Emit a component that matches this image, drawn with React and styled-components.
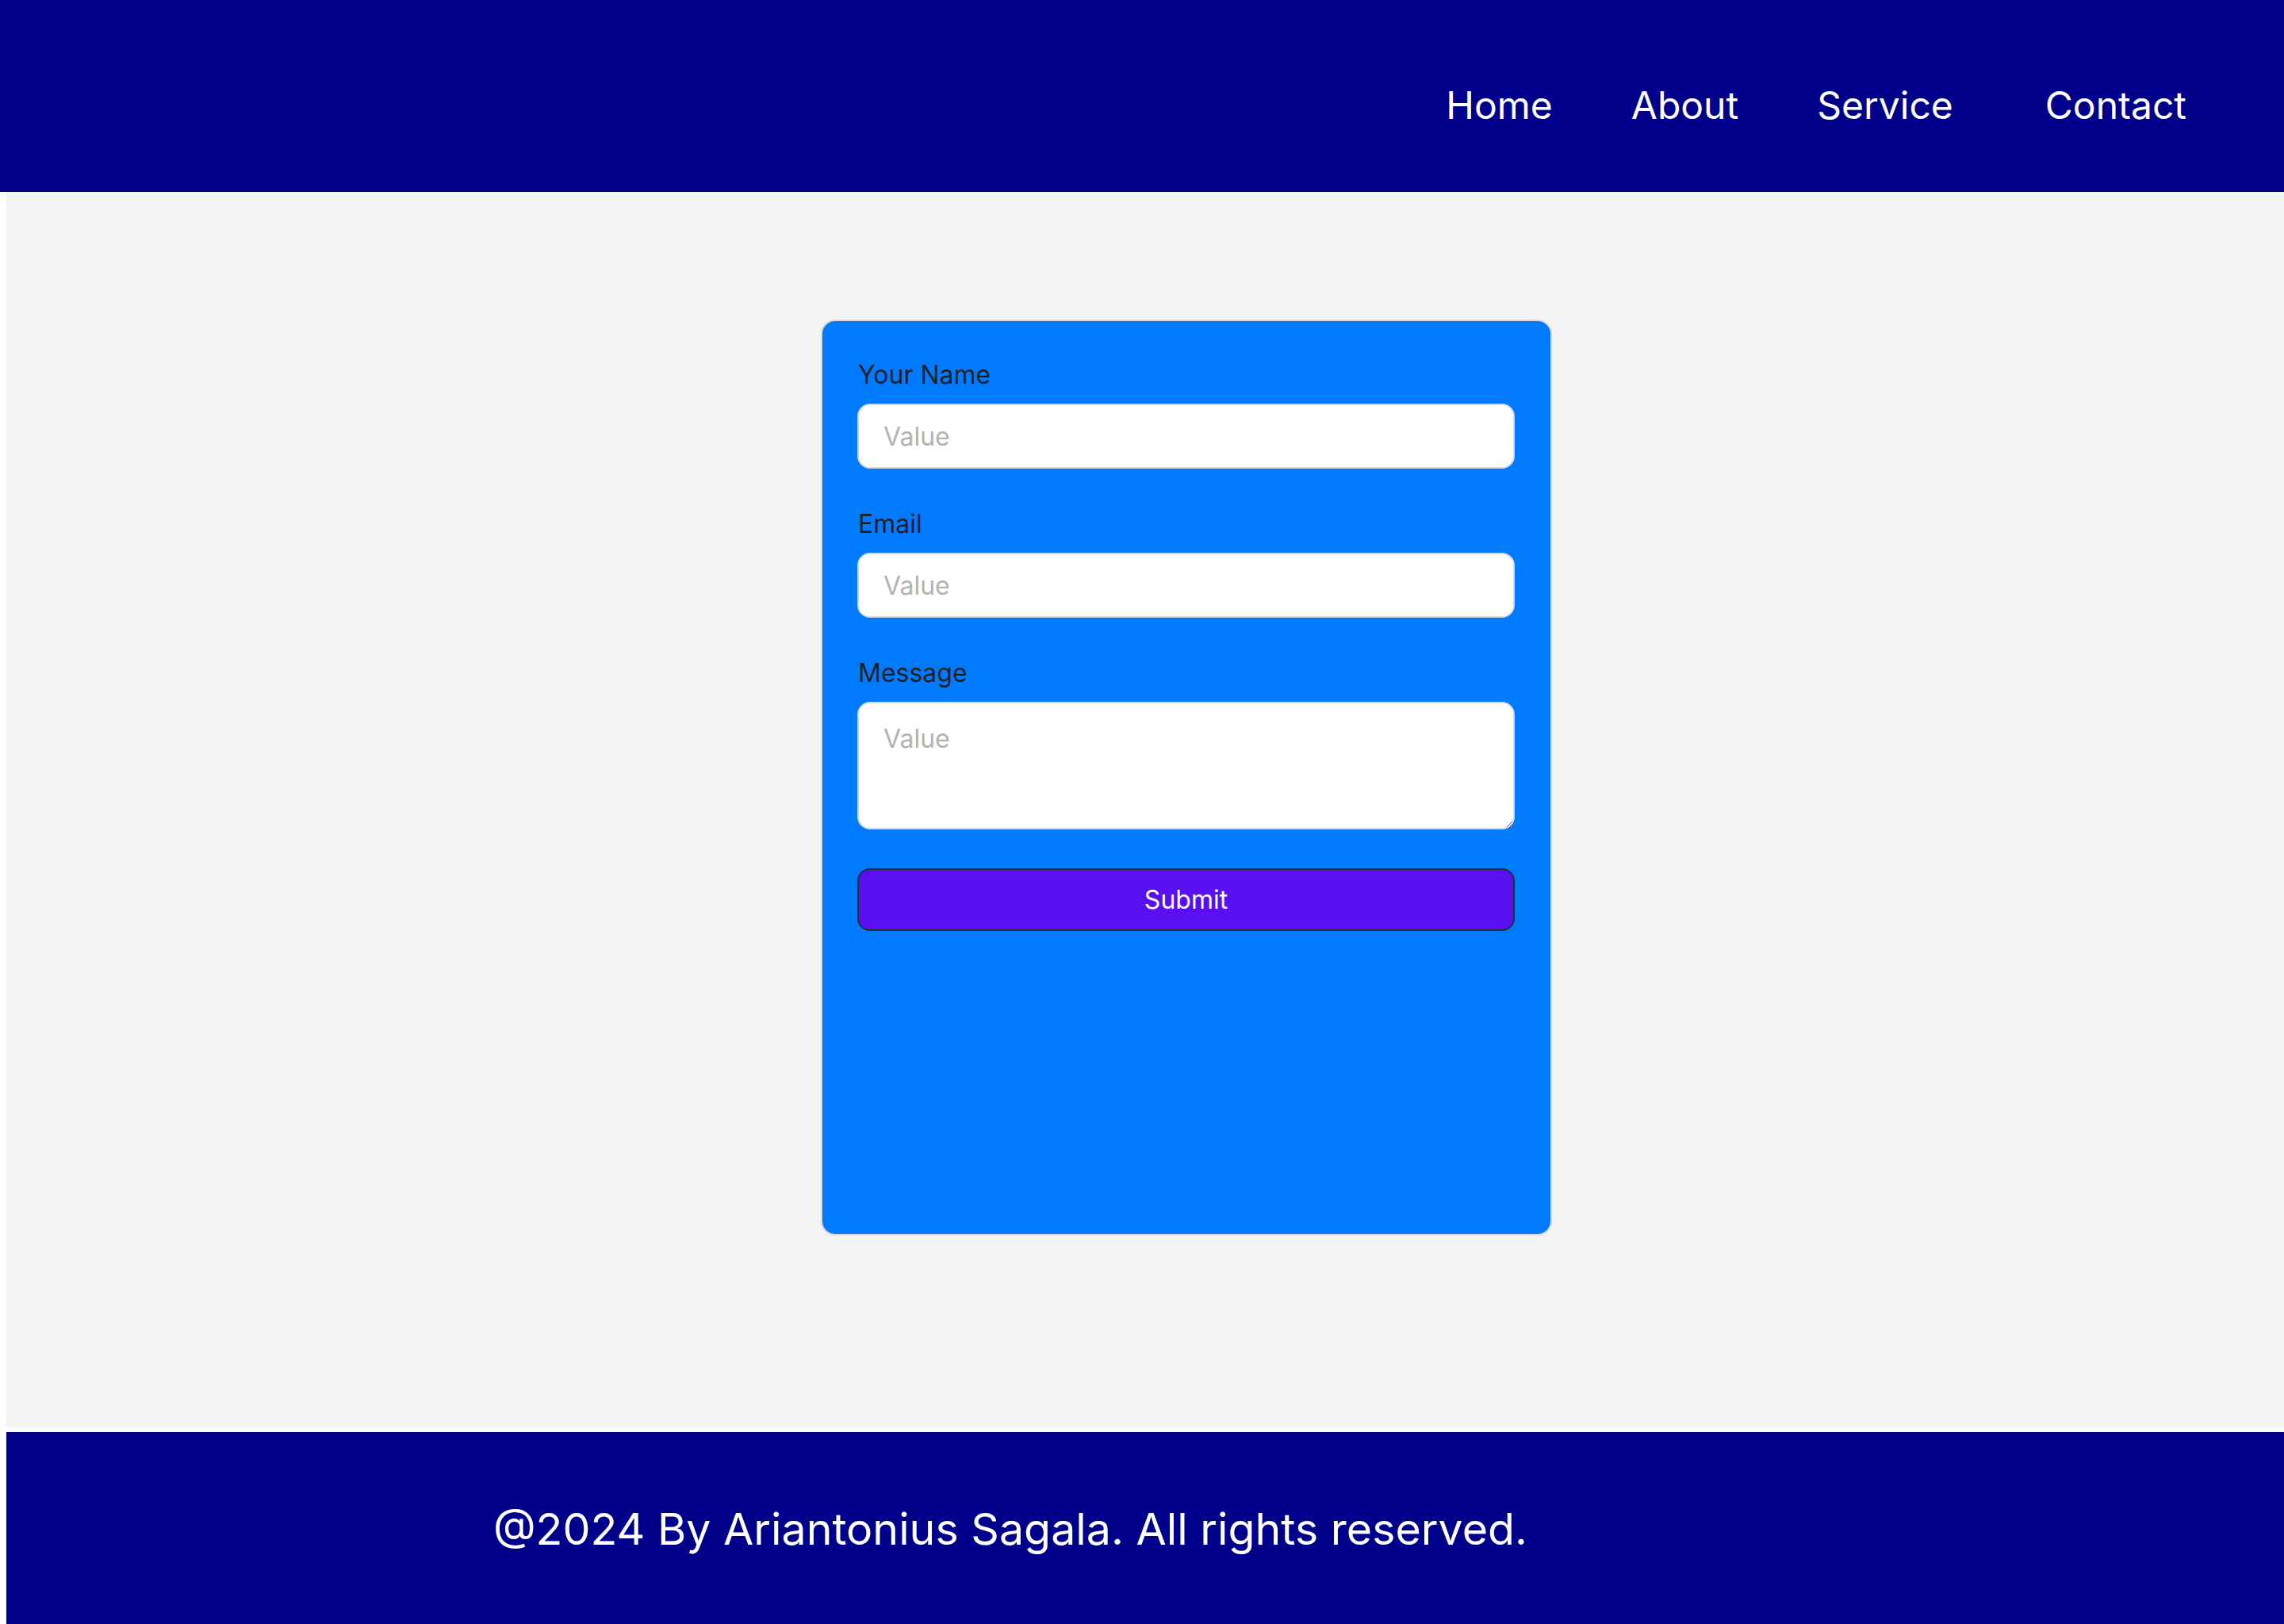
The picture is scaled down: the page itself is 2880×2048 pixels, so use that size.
import React from "react";
import styled, { createGlobalStyle } from "styled-components";

const GlobalStyle = createGlobalStyle`
  html, body {
    margin: 0;
    padding: 0;
    background: #ffffff;
    font-family: Inter, "Noto Sans", sans-serif;
  }
  * { box-sizing: border-box; }
`;

const Header = styled.header`
  height: 242px;
  background: #00008b;
  display: flex;
  justify-content: flex-end;
  align-items: center;
  padding: 22px 123px 0 0;
`;

const Nav = styled.nav`
  display: flex;
  align-items: center;
  gap: 99px;
`;

const NavLink = styled.a`
  color: #ffffff;
  font-size: 48px;
  font-weight: 400;
  text-decoration: none;
  margin-left: ${(p) => (p.$extra ? `${p.$extra}px` : "0")};
`;

const Main = styled.main`
  margin-left: 8px;
  height: 1558px;
  background: #f3f3f3;
  padding: 161px 0 0 1027px;
`;

const Card = styled.form`
  width: 922px;
  height: 1155px;
  background: #007bff;
  border: 2px solid #d9d9d9;
  border-radius: 18px;
  padding: 47px 45px 0 44px;
  display: flex;
  flex-direction: column;
  gap: 49px;
`;

const Field = styled.div`
  display: flex;
  flex-direction: column;
  gap: 15px;
`;

const Label = styled.label`
  font-size: 32px;
  line-height: 42px;
  color: #1e1e1e;
  padding-left: 1px;
`;

const fieldBase = `
  width: 100%;
  border: 2px solid #d9d9d9;
  border-radius: 16px;
  background: #ffffff;
  font-family: Inter, "Noto Sans", sans-serif;
  font-size: 32px;
  line-height: 42px;
  color: #1e1e1e;
  outline: none;
  &::placeholder { color: #b3b3b3; }
`;

const Input = styled.input`
  ${fieldBase}
  height: 82px;
  padding: 0 31px;
`;

const TextArea = styled.textarea`
  ${fieldBase}
  height: 161px;
  padding: 24px 31px;
  resize: vertical;
  display: block;
`;

const SubmitButton = styled.button`
  height: 79px;
  width: 100%;
  background: #5a0ef2;
  border: 2px solid #2c2c2c;
  border-radius: 16px;
  color: #ffffff;
  font-family: Inter, "Noto Sans", sans-serif;
  font-size: 32px;
  cursor: pointer;
`;

const Footer = styled.footer`
  margin: 6px 0 0 8px;
  height: 242px;
  background: #00008b;
  display: flex;
  align-items: center;
  padding-left: 614px;
  color: #ffffff;
  font-size: 55.5px;
`;

export default function App() {
  return (
    <>
      <GlobalStyle />
      <Header>
        <Nav>
          <NavLink href="#">Home</NavLink>
          <NavLink href="#">About</NavLink>
          <NavLink href="#">Service</NavLink>
          <NavLink href="#" $extra={17}>Contact</NavLink>
        </Nav>
      </Header>
      <Main>
        <Card onSubmit={(e) => e.preventDefault()}>
          <Field>
            <Label>Your Name</Label>
            <Input placeholder="Value" />
          </Field>
          <Field>
            <Label>Email</Label>
            <Input placeholder="Value" />
          </Field>
          <Field>
            <Label>Message</Label>
            <TextArea placeholder="Value" />
          </Field>
          <SubmitButton type="submit">Submit</SubmitButton>
        </Card>
      </Main>
      <Footer>@2024 By Ariantonius Sagala. All rights reserved.</Footer>
    </>
  );
}
